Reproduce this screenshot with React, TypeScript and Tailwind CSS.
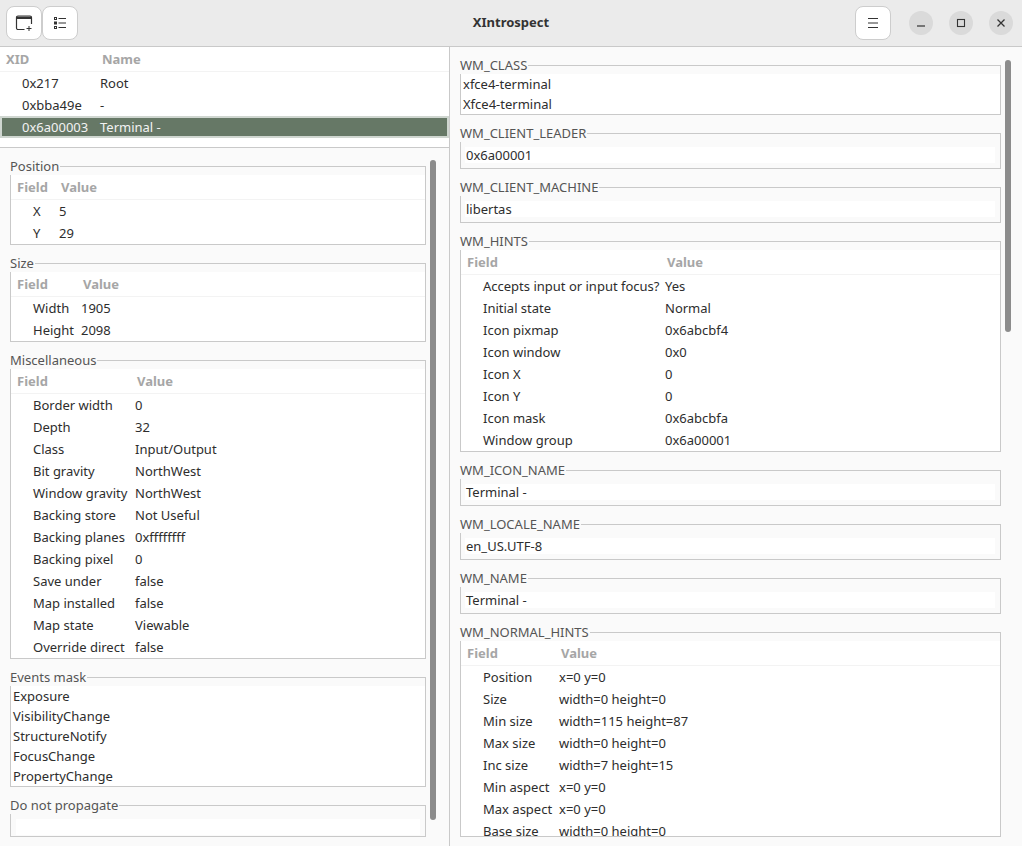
import type { ReactNode } from 'react';

type Row = [string, string];

const misc: Row[] = [
  ['Border width', '0'],
  ['Depth', '32'],
  ['Class', 'Input/Output'],
  ['Bit gravity', 'NorthWest'],
  ['Window gravity', 'NorthWest'],
  ['Backing store', 'Not Useful'],
  ['Backing planes', '0xffffffff'],
  ['Backing pixel', '0'],
  ['Save under', 'false'],
  ['Map installed', 'false'],
  ['Map state', 'Viewable'],
  ['Override direct', 'false'],
];

const hints: Row[] = [
  ['Accepts input or input focus?', 'Yes'],
  ['Initial state', 'Normal'],
  ['Icon pixmap', '0x6abcbf4'],
  ['Icon window', '0x0'],
  ['Icon X', '0'],
  ['Icon Y', '0'],
  ['Icon mask', '0x6abcbfa'],
  ['Window group', '0x6a00001'],
];

const normalHints: Row[] = [
  ['Position', 'x=0 y=0'],
  ['Size', 'width=0 height=0'],
  ['Min size', 'width=115 height=87'],
  ['Max size', 'width=0 height=0'],
  ['Inc size', 'width=7 height=15'],
  ['Min aspect', 'x=0 y=0'],
  ['Max aspect', 'x=0 y=0'],
  ['Base size', 'width=0 height=0'],
];

function Frame({ title, className, children }: { title: string; className?: string; children: ReactNode }) {
  return (
    <fieldset className={`min-w-0 border border-[#c9c9c9] ${className ?? ''}`}>
      <legend className="-ml-px h-[18px] pr-px leading-[18px] text-[#555555]">{title}</legend>
      {children}
    </fieldset>
  );
}

// field / value table, first column width differs per frame
function FieldTable({ rows, col }: { rows: Row[]; col: string }) {
  return (
    <div className="bg-white">
      <div className="flex h-[25px] items-center border-b border-[#f3f3f3] pt-px font-bold text-[#a6a6a6]">
        <div className={`${col} pl-[6px]`}>Field</div>
        <div className="pl-[6px]">Value</div>
      </div>
      {rows.map(([name, value]) => (
        <div key={name} className="flex h-[22px] items-center pt-px">
          <div className={`${col} whitespace-nowrap pl-[22px]`}>{name}</div>
          <div className="whitespace-nowrap pl-1">{value}</div>
        </div>
      ))}
    </div>
  );
}

function ValueFrame({ title, value }: { title: string; value: string }) {
  return (
    <Frame title={title}>
      <div className="my-[5px] ml-1 mr-[5px] flex h-[16px] items-center bg-white pl-px pt-px">{value}</div>
    </Frame>
  );
}

function HeaderButton({ children }: { children: ReactNode }) {
  return (
    <button className="flex h-[34px] w-[36px] items-center justify-center rounded-lg border border-[#cdcdcd] bg-white">
      {children}
    </button>
  );
}

function WindowButton({ children }: { children: ReactNode }) {
  return <button className="flex h-6 w-6 items-center justify-center rounded-full bg-[#dadada]">{children}</button>;
}

function Scrollbar({ className }: { className: string }) {
  return <div className={`absolute w-[6px] rounded-full bg-[#8c8c8c] ${className}`} />;
}

function HeaderBar() {
  return (
    <header className="relative flex h-[47px] items-center border-b border-[#c9c9c9] bg-[#ebebeb] pl-[6px] pr-[9px]">
      <div className="flex gap-0">
        <HeaderButton>
          <svg width="18" height="18" viewBox="0 0 18 18" fill="none" stroke="#333333" strokeWidth="1.2">
            <path d="M9.5 15.5H3a1.5 1.5 0 0 1-1.5-1.5V3.5A1.5 1.5 0 0 1 3 2h12a1.5 1.5 0 0 1 1.5 1.5V10" />
            <path d="M1.5 3.8h15" strokeWidth="2.4" />
            <path d="M14 12v5M11.5 14.5h5" strokeWidth="1" />
          </svg>
        </HeaderButton>
        <HeaderButton>
          <svg width="14" height="14" viewBox="0 0 14 14" fill="none" stroke="#333333" strokeWidth="1">
            <rect x="1.5" y="1.5" width="2" height="2" />
            <rect x="1.5" y="6" width="2" height="2" />
            <rect x="1.5" y="10.5" width="2" height="2" />
            <path d="M5.5 2.5H13M5.5 7H13M5.5 11.5H13" />
          </svg>
        </HeaderButton>
      </div>
      <h1 className="absolute left-0 right-0 text-center font-bold text-[#333333]">XIntrospect</h1>
      <div className="ml-auto flex items-center gap-[16px]">
        <div className="mr-[2px]">
          <HeaderButton>
            <svg width="12" height="12" viewBox="0 0 12 12" fill="none" stroke="#333333" strokeWidth="1">
              <path d="M1 1.5h10M1 6h10M1 10.5h10" />
            </svg>
          </HeaderButton>
        </div>
        <WindowButton>
          <svg width="10" height="10" viewBox="0 0 10 10" fill="none" stroke="#333333" strokeWidth="1.2">
            <path d="M1 8h8" />
          </svg>
        </WindowButton>
        <WindowButton>
          <svg width="10" height="10" viewBox="0 0 10 10" fill="none" stroke="#333333" strokeWidth="1.1">
            <rect x="1.5" y="1.5" width="7" height="7" />
          </svg>
        </WindowButton>
        <WindowButton>
          <svg width="10" height="10" viewBox="0 0 10 10" fill="none" stroke="#333333" strokeWidth="1.3">
            <path d="M1.5 1.5l7 7M8.5 1.5l-7 7" />
          </svg>
        </WindowButton>
      </div>
    </header>
  );
}

function WindowTree() {
  return (
    <div className="h-[101px] border-b border-[#c9c9c9] bg-white">
      <div className="flex h-[25px] items-center border-b border-[#f3f3f3] pt-px font-bold text-[#a6a6a6]">
        <div className="w-[96px] pl-[6px]">XID</div>
        <div className="pl-[6px]">Name</div>
      </div>
      <div className="flex h-[22px] items-center pt-px">
        <div className="w-[96px] pl-[22px]">0x217</div>
        <div className="pl-1">Root</div>
      </div>
      <div className="flex h-[22px] items-center pt-px">
        <div className="w-[96px] pl-[22px]">0xbba49e</div>
        <div className="pl-1">-</div>
      </div>
      <div className="flex h-[22px] items-center border-2 border-[#cfd6d0] bg-[#667866] pt-px text-[#f2f2f2]">
        <div className="w-[94px] pl-[20px]">0x6a00003</div>
        <div className="pl-1">Terminal -</div>
      </div>
    </div>
  );
}

export default function App() {
  return (
    <div className="flex h-[846px] w-[1022px] flex-col overflow-hidden bg-[#fafafa] font-['Noto_Sans',sans-serif] text-[13px] text-[#2d2d2d]">
      <HeaderBar />
      <div className="flex min-h-0 flex-1">
        <div className="flex w-[450px] flex-col border-r border-[#c9c9c9]">
          <WindowTree />
          <div className="relative flex flex-1 flex-col gap-[9px] overflow-hidden pb-[9px] pl-[10px] pr-[23px] pt-[9px]">
            <Frame title="Position">
              <FieldTable col="w-[44px]" rows={[['X', '5'], ['Y', '29']]} />
            </Frame>
            <Frame title="Size">
              <FieldTable col="w-[66px]" rows={[['Width', '1905'], ['Height', '2098']]} />
            </Frame>
            <Frame title="Miscellaneous">
              <FieldTable col="w-[120px]" rows={misc} />
            </Frame>
            <Frame title="Events mask">
              <div className="bg-white pl-[2px]">
                {['Exposure', 'VisibilityChange', 'StructureNotify', 'FocusChange', 'PropertyChange'].map((e) => (
                  <div key={e} className="flex h-5 items-center pt-px">{e}</div>
                ))}
              </div>
            </Frame>
            <Frame title="Do not propagate" className="h-[41px] overflow-hidden">
              <div className="m-[5px] h-[16px] bg-white" />
            </Frame>
            <Scrollbar className="left-[430px] top-[12px] h-[660px]" />
          </div>
        </div>
        <div className="relative flex flex-1 flex-col gap-[9px] overflow-hidden pl-[10px] pr-[21px] pt-[9px]">
          <Frame title="WM_CLASS">
            <div className="bg-white pl-[2px]">
              <div className="flex h-5 items-center pt-px">xfce4-terminal</div>
              <div className="flex h-5 items-center pt-px">Xfce4-terminal</div>
            </div>
          </Frame>
          <ValueFrame title="WM_CLIENT_LEADER" value="0x6a00001" />
          <ValueFrame title="WM_CLIENT_MACHINE" value="libertas" />
          <Frame title="WM_HINTS">
            <FieldTable col="w-[200px]" rows={hints} />
          </Frame>
          <ValueFrame title="WM_ICON_NAME" value="Terminal -" />
          <ValueFrame title="WM_LOCALE_NAME" value="en_US.UTF-8" />
          <ValueFrame title="WM_NAME" value="Terminal -" />
          <Frame title="WM_NORMAL_HINTS" className="h-[214px] overflow-hidden">
            <div className="h-[195px] overflow-hidden">
              <FieldTable col="w-[94px]" rows={normalHints} />
            </div>
          </Frame>
          <Scrollbar className="left-[555px] top-[13px] h-[272px]" />
        </div>
      </div>
    </div>
  );
}
